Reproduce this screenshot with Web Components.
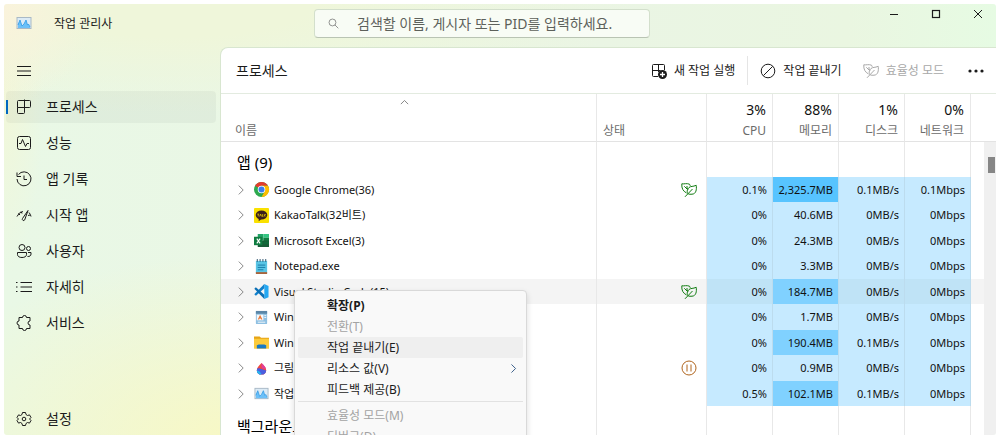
<!DOCTYPE html>
<html lang="ko">
<head>
<meta charset="utf-8">
<meta name="viewport" content="width=device-width, initial-scale=1">
<title>작업 관리자</title>
<style>
    body {
        margin: 0;
        background: #fff;
        font-family: "Noto Sans", "Noto Sans CJK KR", sans-serif;
        font-size: 12px;
        color: #1b1b1b;
    }
</style>
</head>
<body>
<task-manager></task-manager>

<script>
const ICONS = {
    app: `<g stroke="none"><rect x=".5" y="2" width="15" height="12" fill="#a9b9c6"/><rect x="1.500" y="3" width="13" height="10" fill="#dcebf6"/><path d="M2 13V9l2-4 2 6 2-2 2-4 1.500 5 1-1 1.500 3v1z" fill="#6cc0f8"/></g><path d="M2 10l2-5 2 6 2-2 2-4 1.500 5 1-1 1.500 3" stroke="#2f9ae6" stroke-width=".8"/>`,
    menu: `<path d="M1 3.500h14M1 8h14M1 12.500h14"/>`,
    processes: `<path d="M2.500 1.500h11a1 1 0 0 1 1 1v5a1 1 0 0 1-1 1h-12v-6a1 1 0 0 1 1-1zM1.500 8.500v5a1 1 0 0 0 1 1h5a1 1 0 0 0 1-1v-13"/>`,
    performance: `<rect x="1.500" y="1.500" width="13" height="13" rx="2"/><path d="M3 8.500h2l1.500-4 3 7 1.500-3h2"/>`,
    history: `<path d="M2.500 3.500a7 7 0 1 1-1.500 4.500M1 1.500v4h4M8 4.500v4h3"/>`,
    startup: `<path d="M1 9.500a8 8 0 0 1 6-5M15 9.500a8 8 0 0 0-2-4M2.500 6.500l1.500 1.500M5 4.500l1 2"/><path d="M12 3.500L6.500 11.500a1.300 1.300 0 0 0 2.200 1.400zM14 8l-2 .5"/>`,
    users: `<circle cx="6" cy="4.500" r="3"/><circle cx="12.500" cy="5.500" r="2"/><path d="M1.500 9.500h9v2c0 2-2 3-4.500 3s-4.500-1-4.500-3zM12 9.500h3v1.500c0 2-1.500 2.500-3.500 2.500"/>`,
    details: `<path d="M4.500 3.500H16M4.500 8H16M4.500 12.500H16M0 3.500h1.500M0 8h1.500M0 12.500h1.500"/>`,
    services: `<path d="M6.500 2.500a2 2 0 0 1 4 0h3.500v3.500a2 2 0 0 0 0 4v3.500h-3.500a2 2 0 0 1-4 0H3v-3.500a2 2 0 0 1 0-4V2.500z" stroke-linejoin="round"/>`,
    settings: `<circle cx="8" cy="8" r="1.800"/><path d="M6.500 1.500h3l.5 2 1.500 1 2-.6 1.500 2.600-1.500 1.500 1.500 1.500-1.500 2.600-2-.6-1.500 1-.5 2h-3l-.5-2-1.500-1-2 .6L1 9.500 2.500 8 1 6.500l1.500-2.600 2 .6 1.500-1z" stroke-linejoin="round"/>`,
    search: `<circle cx="6.500" cy="6.500" r="5"/><path d="M10 10l5 5"/>`,
    minimize: `<path d="M4 8.500h8"/>`,
    maximize: `<rect x="4.500" y="4.500" width="7" height="7" stroke-width="1.200"/>`,
    close: `<path d="M4 4l8 8M12 4l-8 8"/>`,
    run: `<path d="M7 13.500H2.500a1 1 0 0 1-1-1v-10a1 1 0 0 1 1-1h10a1 1 0 0 1 1 1V7M1.500 7.500h6v-6M7.500 7.500h2M7.500 7v2"/><circle cx="11.500" cy="11.500" r="4.500" fill="currentColor" stroke="none"/><path d="M11.500 9v5M9 11.500h5" stroke="#fff" stroke-width="1.300"/>`,
    end: `<circle cx="8" cy="8" r="6.800"/><path d="M3.500 12.500l9-9"/>`,
    leaf: `<path d="M5.500 11C2 9 .5 6.500.8 1.800c2.700.4 4.700-.8 7.700.4l.8 1.600M3.300 4.300L6 7M6 4v3h1.500"/><path d="M7.300 12C5.500 10.500 6 7.500 8 5.500c1.800-1.500 4-.7 7.200-2.200.6 4 0 8.700-4.200 8.900-1.500.1-2.700.1-3.700-.2zM4 14.800L11.500 7"/>`,
    more: `<g fill="currentColor" stroke="none"><circle cx="2" cy="8" r="1.600"/><circle cx="8" cy="8" r="1.600"/><circle cx="14" cy="8" r="1.600"/></g>`,
    up: `<path d="M3.500 10L8 5.500l4.500 4.500"/>`,
    right: `<path d="M5.500 3l5 5-5 5"/>`,
    paused: `<circle cx="8" cy="8" r="7"/><path d="M6 4.500v7M10 4.500v7"/>`,
    chrome: `<g stroke="none"><circle cx="8" cy="8" r="8" fill="#2da94f"/><path d="M8 8L1.100 4A8 8 0 0 1 15 4H8z" fill="#e33b2e"/><path d="M8 4h7a8 8 0 0 1-7 12l4-7z" fill="#fdbd00"/><circle cx="8" cy="8" r="4" fill="#fff"/><circle cx="8" cy="8" r="3.200" fill="#3b7ded"/></g>`,
    kakao: `<g stroke="none"><rect width="16" height="16" rx="1" fill="#fae100"/><ellipse cx="8" cy="7.500" rx="6.200" ry="4.800" fill="#3b1f1b"/><path d="M5 11l0 3 4-3z" fill="#3b1f1b"/></g><path d="M3.500 6.500h2M4.500 6.500V9M6 9l1-2.500L8 9M9 6.500V9h1M11 6.500V9M12.500 6.500L11.500 8l1 1" stroke="#fae100" stroke-width=".7"/>`,
    excel: `<g stroke="none"><path d="M4 1h6v7H4z" fill="#21a366"/><path d="M10 1h6v4h-6z" fill="#33c481"/><path d="M10 5h6v4h-6z" fill="#107c41"/><path d="M4 8h12v7H4z" fill="#185c37"/><path d="M10 9h6v3h-6z" fill="#10693a"/><rect y="4" width="9" height="9" fill="#107c41"/></g><path d="M3 6l3.500 5M6.500 6L3 11" stroke="#fff" stroke-width="1.200"/>`,
    notepad: `<g stroke="none"><rect x="2" y="2" width="12" height="13" fill="#59c5e5"/><rect x="2" y="14" width="12" height="2" fill="#a8643c"/></g><path d="M3.500 0v3M6.500 0v3M9.500 0v3M12.500 0v3" stroke="#29506b"/><path d="M4 6.500h8M4 9h8M4 11.500h6" stroke="#1879a6"/>`,
    vscode: `<g stroke="none"><path d="M11 0l4.500 2v12L11 16z" fill="#24a8f2"/><path d="M11 0v4.500L2 12.500.3 11z" fill="#1081cc"/><path d="M11 16v-4.500L2 3.500.3 5z" fill="#0b6fb5"/></g>`,
    wordpad: `<g stroke="none"><rect x="2" y="1" width="12" height="14" rx="1" fill="#8fc0e2"/><rect x="2" y="1" width="12" height="3" fill="#5a86a8"/><rect x="3" y="5" width="7" height="6" fill="#f7f9fb"/><path d="M4 10l2.500-5L9 10H7.500L7 9H6l-.5 1z" fill="#e8793a"/></g><path d="M11 6h2M11 8h2M4 13h8" stroke="#f4f8fb"/>`,
    folder: `<g stroke="none"><path d="M0 1.500h6L7.500 3H16v11H0z" fill="#e6a416"/><path d="M0 4h16v10.500H0z" fill="#fccb3c"/><path d="M3 14.500V11l2-1h6l2 1v3.500z" fill="#1879c4"/></g>`,
    paint: `<g stroke="none"><path d="M8 2c3 3 5 5 5 8 0 2.500-2 4.500-5 4.500S3 12.500 3 10c0-3 2-5 5-8z" fill="#f0483e"/><path d="M3.500 8c3-1 4 1 9.500 2 0 2.500-2 4.500-5 4.500S3 12.500 3 10z" fill="#4a5fe0"/><path d="M3 10c2 0 4 1 5 4.500-3 0-5-2-5-4.500z" fill="#27b6ee"/><path d="M8 2c3 3 4 4 4.700 6C10 9 8.500 8 8 6z" fill="#e03d9b"/></g>`
};

class TmIcon extends HTMLElement {
    connectedCallback() {
        const root = this.attachShadow({ mode: "open" });
        root.innerHTML = `
        <style>
            :host { display: inline-flex; flex: none; width: var(--icon-size, 16px); height: var(--icon-size, 16px); }
            svg { width: 100%; height: 100%; overflow: visible; }
        </style>
        <svg viewBox="0 0 16 16" fill="none" stroke="currentColor" stroke-width="1" aria-hidden="true">${ICONS[this.getAttribute("name")]}</svg>
        `;
    }
}
customElements.define("tm-icon", TmIcon);

class TitleBar extends HTMLElement {
    constructor() {
        super();
        this.attachShadow({ mode: "open" }).innerHTML = `
        <style>
            :host {
                display: grid;
                grid-template-columns: 310px minmax(120px, 336px) 1fr;
                height: 43px;
                flex: none;
            }
            .brand { display: flex; align-items: center; gap: 22px; padding: 0 0 5px 12px; }
            .search {
                box-sizing: border-box;
                display: flex;
                align-items: center;
                height: 29px;
                margin-top: 5px;
                padding-left: 13px;
                gap: 18px;
                background: #f8fcf5;
                border: 1px solid #d3dfcc;
                border-bottom-color: #b9c4b3;
                border-radius: 4px;
                color: #666;
                --icon-size: 11px;
            }
            input {
                flex: 1;
                min-width: 0;
                padding: 0;
                border: 0;
                outline: 0;
                background: none;
                font: 14px/20px "Noto Sans", "Noto Sans CJK KR", sans-serif;
            }
            input::placeholder { color: #5d615b; opacity: 1; }
            .controls { display: flex; justify-content: flex-end; gap: 6px; }
            button {
                display: flex;
                align-items: center;
                justify-content: center;
                width: 36px;
                height: 20px;
                padding: 0;
                border: 0;
                background: none;
                color: #1b1b1b;
            }
        </style>
        <div class="brand"><tm-icon name="app"></tm-icon><span>작업 관리사</span></div>
        <label class="search">
            <tm-icon name="search"></tm-icon>
            <input type="text" aria-label="검색" placeholder="검색할 이름, 게시자 또는 PID를 입력하세요.">
        </label>
        <div class="controls">
            <button aria-label="최소화"><tm-icon name="minimize"></tm-icon></button>
            <button aria-label="최대화"><tm-icon name="maximize"></tm-icon></button>
            <button aria-label="닫기"><tm-icon name="close"></tm-icon></button>
        </div>
        `;
    }
}
customElements.define("title-bar", TitleBar);

class NavItem extends HTMLElement {
    connectedCallback() {
        const root = this.attachShadow({ mode: "open" });
        root.innerHTML = `
        <style>
            :host { display: block; }
            button {
                box-sizing: border-box;
                display: flex;
                align-items: center;
                gap: 14px;
                width: 100%;
                height: 32px;
                padding: 0 0 0 8px;
                border: 0;
                border-left: 2px solid transparent;
                border-radius: 4px;
                background: none;
                color: #1b1b1b;
                font: 14px/20px "Noto Sans", "Noto Sans CJK KR", sans-serif;
                --icon-size: 16px;
            }
            :host([selected]) button {
                background: linear-gradient(#0067c0, #0067c0) 0 50% / 2px 14px no-repeat border-box, rgba(0, 0, 0, .04);
            }
        </style>
        <button><tm-icon name="${this.getAttribute("icon")}"></tm-icon><slot></slot></button>
        `;
    }
}
customElements.define("nav-item", NavItem);

class SideNav extends HTMLElement {
    constructor() {
        super();
        this.attachShadow({ mode: "open" }).innerHTML = `
        <style>
            :host { display: flex; box-sizing: border-box; width: 217px; flex: none; }
            nav { flex: 1; display: flex; flex-direction: column; gap: 4px; padding: 8px 5px 0 2px; }
            .settings { margin-top: auto; }
        </style>
        <nav>
            <nav-item icon="menu"></nav-item>
            <nav-item icon="processes" selected>프로세스</nav-item>
            <nav-item icon="performance">성능</nav-item>
            <nav-item icon="history">앱 기록</nav-item>
            <nav-item icon="startup">시작 앱</nav-item>
            <nav-item icon="users">사용자</nav-item>
            <nav-item icon="details">자세히</nav-item>
            <nav-item icon="services">서비스</nav-item>
            <nav-item icon="settings" class="settings">설정</nav-item>
        </nav>
        `;
    }
}
customElements.define("side-nav", SideNav);

class CommandBar extends HTMLElement {
    constructor() {
        super();
        this.attachShadow({ mode: "open" }).innerHTML = `
        <style>
            :host {
                display: flex;
                align-items: center;
                flex: none;
                height: 45px;
                padding: 0 12px 0 15px;
                border-bottom: 1px solid #e3ebe0;
            }
            h1 { flex: 1; margin: 0; font-size: 14px; line-height: 20px; font-weight: 400; }
            button {
                display: flex;
                align-items: center;
                gap: 7px;
                padding: 0;
                border: 0;
                background: none;
                color: #1b1b1b;
                font: 12px/16px "Noto Sans", "Noto Sans CJK KR", sans-serif;
            }
            button:disabled { color: #a8a8a8; }
            i { width: 1px; height: 29px; margin: 0 12px; background: #e5e5e5; }
            .mode { margin: 0 24px 0 21px; }
        </style>
        <h1>프로세스</h1>
        <button><tm-icon name="run"></tm-icon>새 작업 실행</button>
        <i></i>
        <button><tm-icon name="end"></tm-icon>작업 끝내기</button>
        <button class="mode" disabled><tm-icon name="leaf"></tm-icon>효율성 모드</button>
        <button aria-label="더 보기"><tm-icon name="more"></tm-icon></button>
        `;
    }
}
customElements.define("command-bar", CommandBar);

// icon, name, status icon, cpu, memory, disk, network, memory heat
const PROCESSES = [
    ["chrome", "Google Chrome(36)", "leaf", "0.1%", "2,325.7MB", "0.1MB/s", "0.1Mbps", "high"],
    ["kakao", "KakaoTalk(32비트)", "", "0%", "40.6MB", "0MB/s", "0Mbps", ""],
    ["excel", "Microsoft Excel(3)", "", "0%", "24.3MB", "0MB/s", "0Mbps", ""],
    ["notepad", "Notepad.exe", "", "0%", "3.3MB", "0MB/s", "0Mbps", ""],
    ["vscode", "Visual Studio Code(15)", "leaf", "0%", "184.7MB", "0MB/s", "0Mbps", "mid"],
    ["wordpad", "Win", "", "0%", "1.7MB", "0MB/s", "0Mbps", ""],
    ["folder", "Win", "", "0%", "190.4MB", "0.1MB/s", "0Mbps", "mid"],
    ["paint", "그림", "paused", "0%", "0.9MB", "0MB/s", "0Mbps", ""],
    ["app", "작업", "", "0.5%", "102.1MB", "0.1MB/s", "0Mbps", "mid"]
];

class ProcessTable extends HTMLElement {
    constructor() {
        super();
        this.shadowDOM = this.attachShadow({ mode: "open" });
        this.render();
    }

    row([icon, name, status, cpu, memory, disk, network, heat]) {
        return `
        <tr class="${icon === "vscode" ? "active" : ""}">
            <td><div class="name"><tm-icon class="chevron" name="right"></tm-icon><tm-icon name="${icon}"></tm-icon><span>${name}</span></div></td>
            <td class="status ${status}">${status ? `<tm-icon name="${status}"></tm-icon>` : ""}</td>
            <td class="num">${cpu}</td>
            <td class="num ${heat}">${memory}</td>
            <td class="num">${disk}</td>
            <td class="num">${network}</td>
            <td></td>
        </tr>`;
    }

    render() {
        this.shadowDOM.innerHTML = `
        <style>
            :host { display: flex; flex: 1; min-height: 0; overflow: hidden; }
            table { flex: 1; align-self: flex-start; width: 0; table-layout: fixed; border-collapse: separate; border-spacing: 0; }
            .c-status { width: 110px; }
            .c-num { width: 66px; }
            .c-gutter { width: 13px; }
            th, td { box-sizing: border-box; padding: 0; border-right: 1px solid #e8e8e8; text-align: left; font-weight: 400; white-space: nowrap; }
            th:last-child, td:last-child { border-right: 0; }
            th { height: 48px; vertical-align: bottom; border-bottom: 1px solid #e3e3e3; color: #6b6b6b; line-height: 16px; padding-bottom: 2px; }
            th b { display: block; font-weight: 400; font-size: 14px; line-height: 20px; color: #111; margin-bottom: 3px; }
            th.r { text-align: right; padding-right: 6px; }
            th:nth-child(2) { padding-left: 6px; }
            .head { display: flex; flex-direction: column; padding: 0 22px 0 14px; }
            .head tm-icon { align-self: center; --icon-size: 13px; margin-bottom: 14px; }
            .group td { height: 35px; }
            .group td:first-child { padding: 5px 0 0 16px; font-size: 15px; line-height: 20px; color: #000; }
            .items td { height: 25px; font-size: 11px; line-height: 16px; color: #111; }
            .items tr:nth-child(even) td { height: 26px; }
            .name { display: flex; align-items: center; padding-left: 13px; }
            .name tm-icon { --icon-size: 15px; margin-right: 5px; }
            .name .chevron { --icon-size: 14px; margin-right: 6px; color: #777; }
            .items .status { padding-right: 9px; text-align: right; line-height: 0; }
            .items .leaf { color: #107c10; }
            .items .paused { color: #b0651d; }
            .items .num { padding-right: 5px; text-align: right; background: #c6eaff; border-right-color: #bcdcee; }
            .items .mid { background: #80d1ff; }
            .items .high { background: #57c4ff; }
            .active td { background: #f4f4f4; }
            .items .active .num { background: #bfe3f6; }
            .items .active .mid { background: #80d1ff; }
            .scroll { display: flex; flex-direction: column; width: 12px; flex: none; }
            .scroll::before { content: ""; height: 47px; border-bottom: 1px solid #e3e3e3; }
            .track { flex: 1; padding: 15px 1px 0 4px; background: #f0f0f0; }
            .thumb { height: 16px; background: #868686; }
        </style>
        <table>
            <colgroup><col><col class="c-status"><col class="c-num" span="4"><col class="c-gutter"></colgroup>
            <thead>
                <tr>
                    <th><div class="head"><tm-icon name="up"></tm-icon>이름</div></th>
                    <th>상태</th>
                    <th class="r"><b>3%</b>CPU</th>
                    <th class="r"><b>88%</b>메모리</th>
                    <th class="r"><b>1%</b>디스크</th>
                    <th class="r"><b>0%</b>네트워크</th>
                    <th></th>
                </tr>
            </thead>
            <tbody><tr class="group"><td>앱 (9)</td><td></td><td></td><td></td><td></td><td></td><td></td></tr></tbody>
            <tbody class="items">${PROCESSES.map(p => this.row(p)).join("")}</tbody>
            <tbody><tr class="group"><td>백그라운드</td><td></td><td></td><td></td><td></td><td></td><td></td></tr></tbody>
        </table>
        <div class="scroll"><div class="track"><div class="thumb"></div></div></div>
        `;
    }
}
customElements.define("process-table", ProcessTable);

class ContextMenu extends HTMLElement {
    constructor() {
        super();
        this.attachShadow({ mode: "open" }).innerHTML = `
        <style>
            :host {
                display: block;
                box-sizing: border-box;
                width: 233px;
                padding: 4px 3px;
                background: #f9f9f9;
                border: 1px solid #d9d9d9;
                border-radius: 4px;
                box-shadow: 0 3px 6px rgba(0, 0, 0, .14);
            }
            button {
                display: flex;
                align-items: center;
                justify-content: space-between;
                width: 100%;
                height: 21px;
                padding: 0 3px 0 29px;
                border: 0;
                border-radius: 2px;
                background: none;
                color: #1b1b1b;
                font: 12px/16px "Noto Sans", "Noto Sans CJK KR", sans-serif;
            }
            button:disabled { color: #a3a3a3; }
            .default { font-weight: 700; }
            .hover { background: #efefef; }
            tm-icon { --icon-size: 13px; color: #123f73; }
            hr { margin: 1px 0 3px; border: 0; border-top: 1px solid #e2e2e2; }
        </style>
        <button class="default">확장(P)</button>
        <button disabled>전환(T)</button>
        <button class="hover">작업 끝내기(E)</button>
        <button>리소스 값(V)<tm-icon name="right"></tm-icon></button>
        <button>피드백 제공(B)</button>
        <hr>
        <button disabled>효율성 모드(M)</button>
        <button disabled>디버그(D)</button>
        `;
    }
}
customElements.define("context-menu", ContextMenu);

class TaskManager extends HTMLElement {
    constructor() {
        super();
        this.attachShadow({ mode: "open" }).innerHTML = `
        <style>
            :host {
                display: flex;
                flex-direction: column;
                box-sizing: border-box;
                height: calc(100vh - 7px);
                margin: 4px 4px 3px;
                overflow: hidden;
                border-radius: 3px;
                background:
                    radial-gradient(circle at 0 10px, #faf3dc, rgba(250, 243, 220, 0) 90px),
                    radial-gradient(ellipse 460px 110px at 170px 0, #eff6da 30%, rgba(239, 246, 218, 0)),
                    radial-gradient(ellipse 40px 190px at 0 80px, #f2f7d8, rgba(242, 247, 216, 0)),
                    radial-gradient(ellipse 330px 190px at 230px 440px, #f8f8c4, rgba(248, 248, 196, 0)),
                    linear-gradient(90deg, #e9f8e6, #eaf5e4 60%, #eaf6e1 85%, #e6fbe3);
            }
            .body { display: flex; flex: 1; min-height: 0; }
            main {
                position: relative;
                display: flex;
                flex-direction: column;
                flex: 1;
                min-width: 0;
                overflow: hidden;
                background: #fff;
                border: 1px solid #d8e6d0;
                border-width: 1px 0 0 1px;
                border-top-left-radius: 8px;
                margin-left: -1px;
            }
            context-menu { position: absolute; left: 73px; top: 242px; }
        </style>
        <title-bar></title-bar>
        <div class="body">
            <side-nav></side-nav>
            <main>
                <command-bar></command-bar>
                <process-table></process-table>
                <context-menu></context-menu>
            </main>
        </div>
        `;
    }
}
customElements.define("task-manager", TaskManager);
</script>
</body>
</html>
